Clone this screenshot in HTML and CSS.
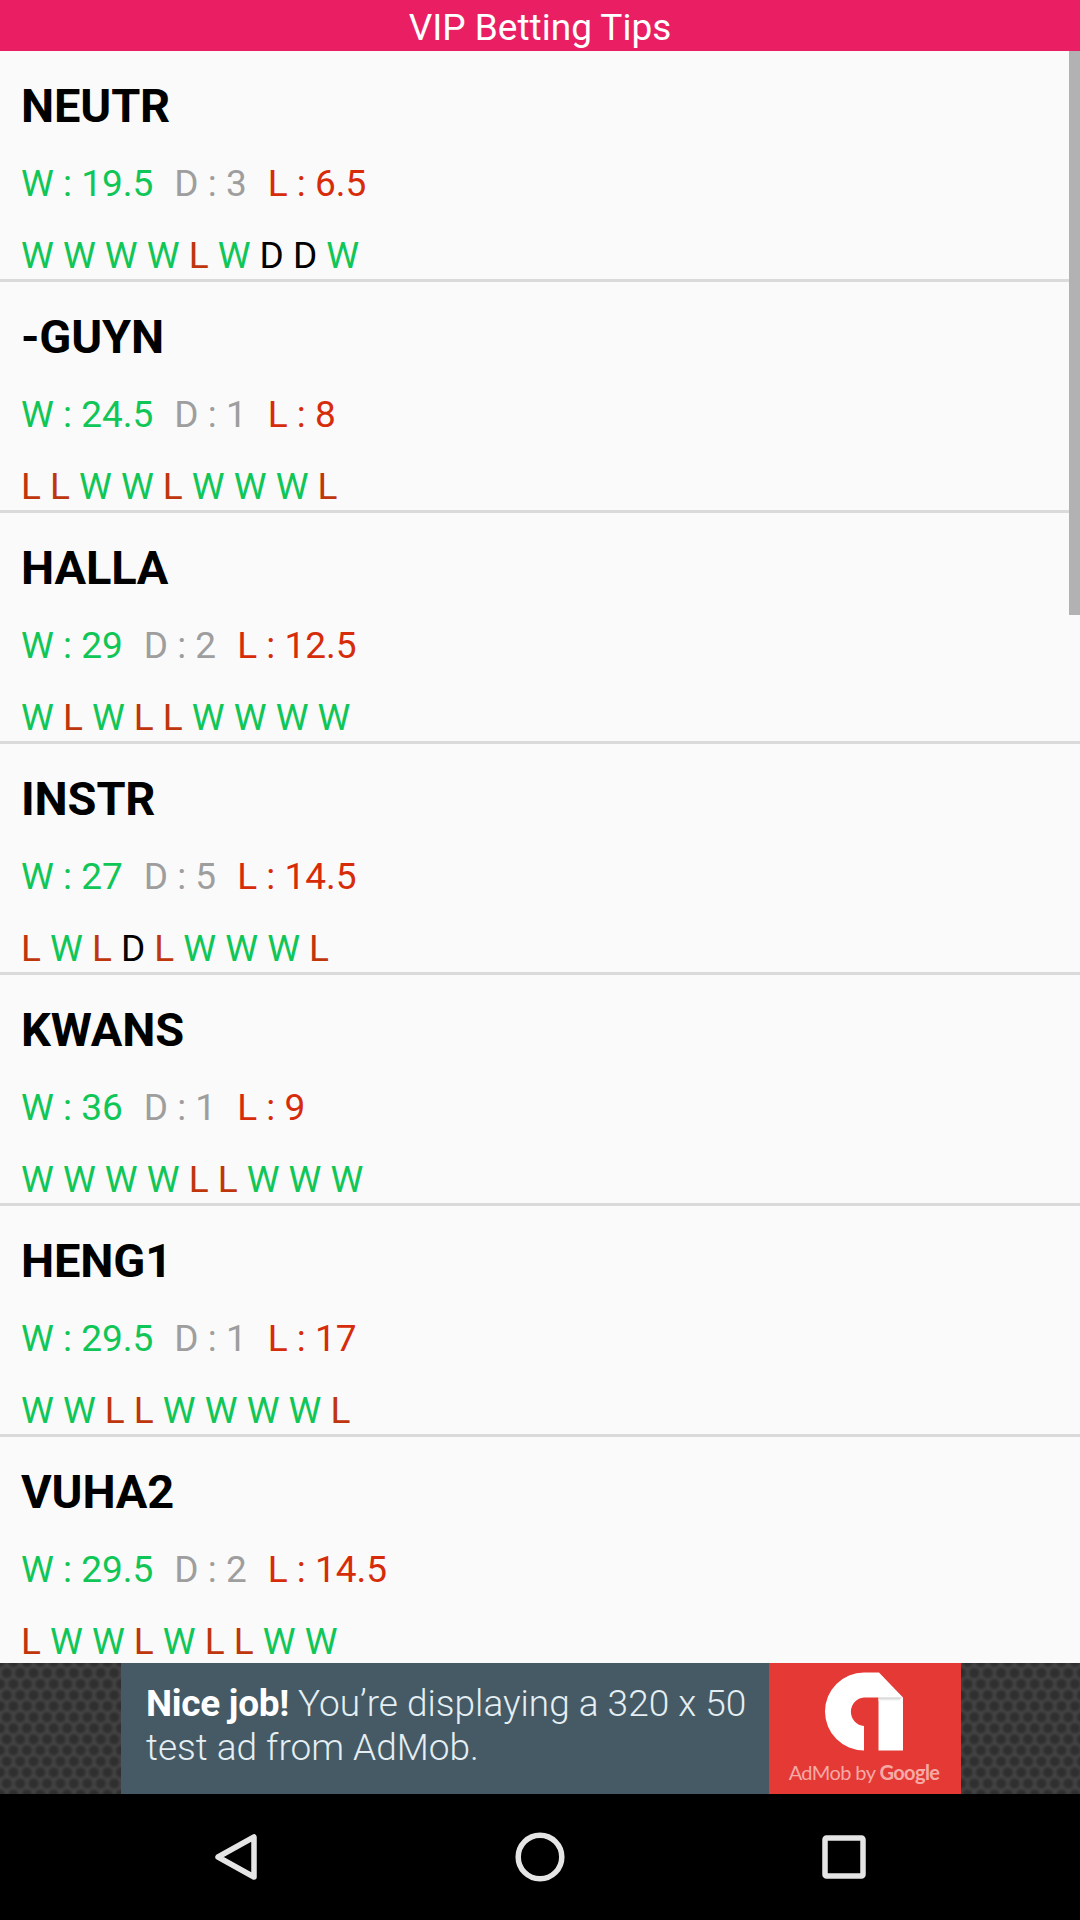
FILE: index.html
```html
<!DOCTYPE html>
<html lang="en">
<head>
<meta charset="utf-8">
<title>VIP Betting Tips</title>
<link rel="stylesheet" href="styles.css">
</head>
<body>
<header class="header">VIP Betting Tips</header>
<main class="list">
  <section class="row">
    <h2 class="name">NEUTR</h2>
    <p class="stats"><span class="win">W : 19.5</span><span class="draw">D : 3</span><span class="loss">L : 6.5</span></p>
    <p class="form"><i class="w">W</i> <i class="w">W</i> <i class="w">W</i> <i class="w">W</i> <i class="l">L</i> <i class="w">W</i> <i>D</i> <i>D</i> <i class="w">W</i></p>
  </section>
  <section class="row">
    <h2 class="name">-GUYN</h2>
    <p class="stats"><span class="win">W : 24.5</span><span class="draw">D : 1</span><span class="loss">L : 8</span></p>
    <p class="form"><i class="l">L</i> <i class="l">L</i> <i class="w">W</i> <i class="w">W</i> <i class="l">L</i> <i class="w">W</i> <i class="w">W</i> <i class="w">W</i> <i class="l">L</i></p>
  </section>
  <section class="row">
    <h2 class="name">HALLA</h2>
    <p class="stats"><span class="win">W : 29</span><span class="draw">D : 2</span><span class="loss">L : 12.5</span></p>
    <p class="form"><i class="w">W</i> <i class="l">L</i> <i class="w">W</i> <i class="l">L</i> <i class="l">L</i> <i class="w">W</i> <i class="w">W</i> <i class="w">W</i> <i class="w">W</i></p>
  </section>
  <section class="row">
    <h2 class="name">INSTR</h2>
    <p class="stats"><span class="win">W : 27</span><span class="draw">D : 5</span><span class="loss">L : 14.5</span></p>
    <p class="form"><i class="l">L</i> <i class="w">W</i> <i class="l">L</i> <i>D</i> <i class="l">L</i> <i class="w">W</i> <i class="w">W</i> <i class="w">W</i> <i class="l">L</i></p>
  </section>
  <section class="row">
    <h2 class="name">KWANS</h2>
    <p class="stats"><span class="win">W : 36</span><span class="draw">D : 1</span><span class="loss">L : 9</span></p>
    <p class="form"><i class="w">W</i> <i class="w">W</i> <i class="w">W</i> <i class="w">W</i> <i class="l">L</i> <i class="l">L</i> <i class="w">W</i> <i class="w">W</i> <i class="w">W</i></p>
  </section>
  <section class="row">
    <h2 class="name">HENG1</h2>
    <p class="stats"><span class="win">W : 29.5</span><span class="draw">D : 1</span><span class="loss">L : 17</span></p>
    <p class="form"><i class="w">W</i> <i class="w">W</i> <i class="l">L</i> <i class="l">L</i> <i class="w">W</i> <i class="w">W</i> <i class="w">W</i> <i class="w">W</i> <i class="l">L</i></p>
  </section>
  <section class="row">
    <h2 class="name">VUHA2</h2>
    <p class="stats"><span class="win">W : 29.5</span><span class="draw">D : 2</span><span class="loss">L : 14.5</span></p>
    <p class="form"><i class="l">L</i> <i class="w">W</i> <i class="w">W</i> <i class="l">L</i> <i class="w">W</i> <i class="l">L</i> <i class="l">L</i> <i class="w">W</i> <i class="w">W</i></p>
  </section>
  <div class="scrollbar"></div>
</main>
<aside class="ad">
  <div class="banner">
    <p class="copy"><b>Nice job!</b> You’re displaying a 320 x 50<br>test ad from AdMob.</p>
    <div class="brand">
      <svg class="logo" viewBox="0 0 78 79" width="78" height="79">
        <defs>
          <linearGradient id="fold" x1="0" y1="0" x2="0" y2="1">
            <stop offset="0" stop-color="#ccc"/><stop offset="1" stop-color="#fff"/>
          </linearGradient>
        </defs>
        <path fill="#fff" d="M39 .5H54L78 25.500V78.500H53.500V25.500H39A14.300 14.300 0 0 0 39 54V78.500A39 39 0 0 1 39 .5Z"/>
        <path fill="url(#fold)" d="M53.500 25.500H77L74 29H53.500Z"/>
      </svg>
      <div class="credit">AdMob by <b>Google</b></div>
    </div>
  </div>
</aside>
<nav class="navbar">
  <svg viewBox="0 0 60 60" width="60" height="60"><path d="M48 9V49L12 29Z"/></svg>
  <svg viewBox="0 0 60 60" width="60" height="60"><circle cx="30" cy="29" r="21.800"/></svg>
  <svg viewBox="0 0 60 60" width="60" height="60"><rect x="11" y="10" width="38" height="38" rx="1.500"/></svg>
</nav>
</body>
</html>
```
FILE: styles.css
```css
* { box-sizing: border-box; }
body {
  margin: 0;
  width: 1080px;
  height: 1920px;
  overflow: hidden;
  display: flex;
  flex-direction: column;
  background: #fafafa;
  color: #000;
  font-family: Roboto, "Liberation Sans", sans-serif;
  font-size: 37px;
}
h2, p { margin: 0; }
.header {
  height: 51px;
  line-height: 55px;
  background: #e91e63;
  color: #fff;
  text-align: center;
}
.list {
  position: relative;
  height: 1612px;
  overflow: hidden;
}
.row {
  height: 231px;
  padding: 27px 21px 0;
  border-bottom: 3px solid #dadada;
}
.name { font-size: 47px; font-weight: 700; line-height: 56px; letter-spacing: -.15px; }
.stats { display: flex; gap: 21px; margin-top: 28px; line-height: 43px; }
.win, .w { color: #0fc657; }
.draw { color: #9e9e9e; }
.loss { color: #d62c0a; }
.form { margin-top: 29px; line-height: 43px; word-spacing: -.1px; }
.form i { font-style: normal; }
.l { color: #bf360c; }
.scrollbar {
  position: absolute;
  top: 0;
  right: 0;
  width: 11px;
  height: 564px;
  background: #b2b2b2;
}
.ad {
  height: 131px;
  display: flex;
  padding-left: 121px;
  background-color: #434343;
  background-image:
    radial-gradient(circle, #2f2f2f 3px, rgba(47, 47, 47, 0) 6.800px),
    radial-gradient(circle, #2f2f2f 3px, rgba(47, 47, 47, 0) 6.800px);
  background-size: 13.450px 22.100px;
  background-position: 0 -1px, 6.700px 10px;
}
.banner { width: 840px; height: 131px; display: flex; background: #455a64; }
.copy {
  width: 648px;
  padding: 19px 0 0 25px;
  color: #e4eef3;
  font-size: 37px;
  font-weight: 300;
  line-height: 44px;
  white-space: nowrap;
}
.copy b { font-weight: 700; color: #fff; letter-spacing: -.3px; }
.brand {
  width: 192px;
  padding: 9px 2px 0 0;
  display: flex;
  flex-direction: column;
  align-items: center;
  background: #e53935;
}
.logo { display: block; }
.credit {
  margin-top: 9px;
  font: 400 20px/24px Lato, sans-serif;
  letter-spacing: -.6px;
  color: #f6aaa5;
  white-space: nowrap;
}
.navbar {
  height: 126px;
  padding: 2px 206px 0;
  display: flex;
  justify-content: space-between;
  align-items: center;
  background: #000;
}
.navbar svg { fill: none; stroke: #e5e5e5; stroke-width: 5.500; stroke-linejoin: round; }
```
